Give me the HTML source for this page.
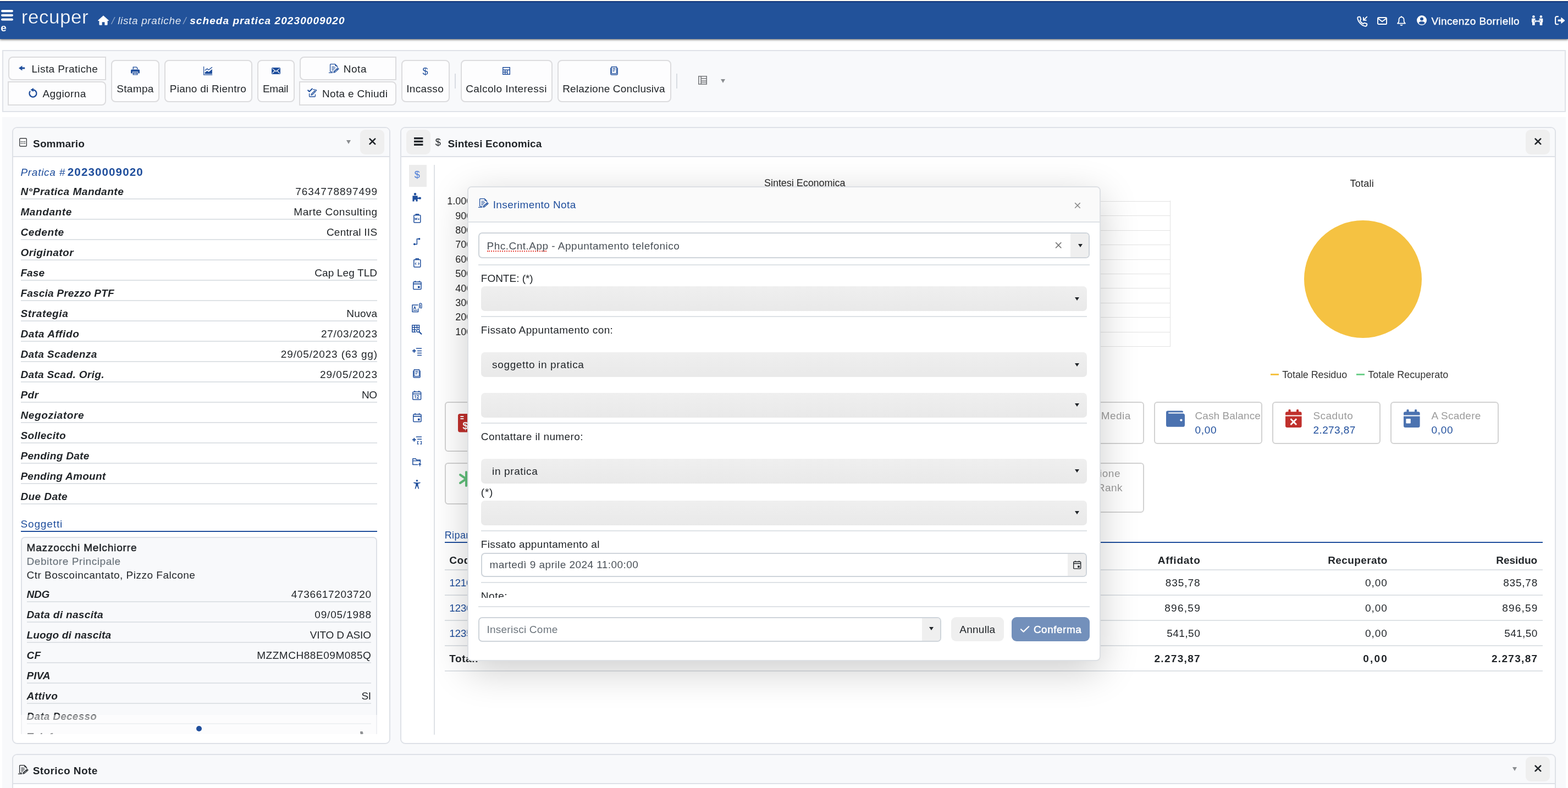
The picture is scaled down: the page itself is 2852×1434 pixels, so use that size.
<!DOCTYPE html>
<html lang="it">
<head>
<meta charset="utf-8">
<title>scheda pratica 20230009020</title>
<style>
*{box-sizing:border-box;margin:0;padding:0}
html,body{width:2852px;height:1434px;overflow:hidden;background:#fff}
body{position:relative;font-family:"Liberation Sans",sans-serif;font-size:19px;color:#212529;line-height:1}
#root{position:absolute;left:0;top:0;width:2852px;height:1434px;overflow:hidden;will-change:transform}
.a{position:absolute}
.x{position:absolute;white-space:nowrap;line-height:1}
svg{display:block;overflow:visible}
#hdr{position:absolute;left:0;top:0;width:2852px;height:71px;background:#22529a;box-shadow:0 1px 4px rgba(0,0,0,.7)}
#hdr .topw{position:absolute;left:0;top:0;width:100%;height:2px;background:#fbfaf2}
#hdr .topd{position:absolute;left:0;top:2px;width:100%;height:2px;background:#0e3278}
#pg{position:absolute;left:4px;top:213px;width:2844px;height:1221px;background:#f8f9fb}
.panel{position:absolute;background:#fff;border:2px solid #dee1e7;border-radius:9px;overflow:hidden}
.ph{position:absolute;left:0;top:0;right:0;height:53px;background:#f8f9fb;border-bottom:2px solid #dee1e7}
.caret{position:absolute;width:0;height:0;border-left:4.5px solid transparent;border-right:4.5px solid transparent;border-top:7px solid #8a8d90}
.cd{position:absolute;width:0;height:0;border-left:4.5px solid transparent;border-right:4.5px solid transparent;border-top:6.5px solid #212529}

.ln{position:absolute;height:2px;background:#dee2e6}
.xbtn{position:absolute;width:44px;height:45px;background:#efefef;border-radius:9px}

.card{position:absolute;background:#fff;border:2px solid #d2d2d2;border-radius:6px}
.gl{position:absolute;height:1px;background:#e2e2e2}
.tl{position:absolute;height:2px;background:#dee2e6}

#modal{position:absolute;left:850px;top:339px;width:1152px;height:864px;background:#fff;border:2px solid #dde0e4;border-radius:8px;box-shadow:0 18px 70px rgba(0,0,0,.2);overflow:hidden}
#modal .mh{position:absolute;left:0;top:0;right:0;height:64px;background:#fafafa;border-bottom:2px solid #dee2e6}
.sel{position:absolute;left:875px;width:1102px;height:44.5px;border-radius:7px;background:linear-gradient(#efefef,#e9e9e9)}
.inp{position:absolute;background:#fff;border:2px solid #ced4da;border-radius:7px;overflow:hidden}
.inp .bt{position:absolute;top:0;bottom:0;right:0;background:#efefef}
.ml{position:absolute;height:2px;background:#dee2e6}
</style>
</head>
<body>
<div id="root">
<div id="pg"></div>
<!-- toolbar -->
<div class="a" style="left:4px;top:91px;width:2844px;height:113px;background:#f8f9fb;border:2px solid #dfe2e8"></div>
<div class="a" style="left:15px;top:103px;width:178px;height:43px;background:#fdfdfe;border:2px solid #dcdcde;border-radius:8px 0 0 8px"></div>
<svg class="a" style="left:33.8px;top:119.4px" width="12" height="10" viewBox="0 0 12 10"><path fill="#1f4e9c" d="M0 5 L6.4 0.4 L6.4 3.5 L11.2 3.5 L11.2 6.5 L6.4 6.5 L6.4 9.6 Z"/></svg>
<div class="x" id="t1" style="left:57.4px;top:115.9px;letter-spacing:0.41px">Lista Pratiche</div>
<div class="a" style="left:14px;top:148px;width:179px;height:44px;background:#fdfdfe;border:2px solid #dcdcde;border-radius:0 8px 8px 0"></div>
<svg class="a" style="left:51.6px;top:160.2px" width="16" height="18" viewBox="0 0 16 18"><path fill="none" stroke="#1f4e9c" stroke-width="2.4" d="M8 3.5 A6.5 6.5 0 1 1 3 5.8"/><path fill="#1f4e9c" d="M8.8 0 L8.8 7 L3.4 3.5 Z"/></svg>
<div class="x" id="t2" style="left:77.5px;top:160.7px;letter-spacing:0.39px">Aggiorna</div>
<div class="a" style="left:202px;top:109px;width:88px;height:77px;background:#fdfdfe;border:2px solid #dcdcde;border-radius:8px"></div>
<svg class="a" style="left:237.7px;top:121px" width="16" height="16" viewBox="0 0 16 16"><g fill="#1f4e9c"><path d="M3.6 0.4 L10.4 0.4 L12.4 2.4 L12.4 5 L3.6 5 Z M5 1.8 L5 5 L11 5 L11 3 L9.8 1.8 Z" fill-rule="evenodd"/><path d="M1.6 5.4 L14.4 5.4 Q16 5.4 16 7 L16 11.6 Q16 12.6 15 12.6 L13.2 12.6 L13.2 9.6 L2.8 9.6 L2.8 12.6 L1 12.6 Q0 12.6 0 11.6 L0 7 Q0 5.4 1.6 5.4 Z"/><path d="M3.6 10.6 L12.4 10.6 L12.4 15.6 L3.6 15.6 Z M5 11.8 L5 12.6 L11 12.6 L11 11.8 Z M5 13.6 L5 14.4 L11 14.4 L11 13.6Z" fill-rule="evenodd"/></g></svg>
<div class="x" id="t3" style="left:212.2px;top:151.9px;letter-spacing:0.34px">Stampa</div>
<div class="a" style="left:299px;top:109px;width:160px;height:77px;background:#fdfdfe;border:2px solid #dcdcde;border-radius:8px"></div>
<svg class="a" style="left:370.2px;top:121px" width="17" height="16" viewBox="0 0 17 16"><g fill="#1f4e9c"><path d="M0 0 L1.2 0 L1.2 14.6 L16.2 14.6 L16.2 15.8 L0 15.8 Z"/><path d="M2.6 13.5 L2.6 10.8 L6.8 7.9 L9.6 9.9 L15.9 5 L15.9 13.5 Z"/></g><path d="M2.6 7.3 L6.8 4.1 L9.6 6.2 L15.9 1.3" fill="none" stroke="#1f4e9c" stroke-width="1.4"/></svg>
<div class="x" id="t4" style="left:308.8px;top:151.9px;letter-spacing:0.26px">Piano di Rientro</div>
<div class="a" style="left:468px;top:109px;width:68px;height:77px;background:#fdfdfe;border:2px solid #dcdcde;border-radius:8px"></div>
<svg class="a" style="left:493.6px;top:123px" width="16" height="12" viewBox="0 0 16 12"><rect x="0" y="0" width="16" height="12" rx="1.6" fill="#1f4e9c"/><path d="M1.2 1.6 L8 7 L14.8 1.6 M1.2 10.6 L5.8 6 M14.8 10.6 L10.2 6" fill="none" stroke="#fff" stroke-width="1.1"/></svg>
<div class="x" id="t5" style="left:477.9px;top:151.9px;letter-spacing:-0.25px">Email</div>
<div class="a" style="left:545px;top:103px;width:176px;height:43px;background:#fdfdfe;border:2px solid #dcdcde;border-radius:8px 0 0 8px"></div>
<svg class="a" style="left:598px;top:115.5px" width="18.6" height="17" viewBox="0 0 18.6 17"><g fill="none" stroke="#1f4e9c" stroke-width="1.3" stroke-linejoin="round" stroke-linecap="round"><path d="M7 14.6 H3.8 Q2.6 14.6 2.6 13.4 V1.8 Q2.6 0.7 3.7 0.7 H11.4 L15.4 4.6 V6.2"/><path d="M5.8 5.3 H10.2 M5.8 7.5 H12 M5.8 9.7 H10.4 M5.8 11.8 H8.4" stroke-width="1.1"/><path d="M0.4 16.3 H6.6" stroke-width="1.2"/></g><path fill="#1f4e9c" d="M11.4 0.7 L15.4 4.6 H12.4 Q11.4 4.6 11.4 3.6 Z M8.2 16.8 L9 13.6 L16.5 6.8 L18.9 9.4 L11.4 16.2 Z"/><path d="M10.8 14.7 L14.9 11" stroke="#fff" stroke-width=".9" stroke-linecap="round"/><path d="M15.5 8 L17.6 10.3" stroke="#fff" stroke-width=".6"/></svg>
<div class="x" id="t6" style="left:624.8px;top:115.9px;letter-spacing:0.52px">Nota</div>
<div class="a" style="left:544px;top:148px;width:177px;height:44px;background:#fdfdfe;border:2px solid #dcdcde;border-radius:0 8px 8px 0"></div>
<svg class="a" style="left:559px;top:160px" width="18" height="17" viewBox="0 0 18 17"><g fill="none" stroke="#1f4e9c" stroke-linejoin="round"><path d="M0.6 3.8 L3.6 6.8 L9.4 1" stroke-width="2"/><path d="M3.6 10 L3.6 15 Q3.6 16 4.6 16 L13.4 16 Q14.4 16 14.4 15 L14.4 11.6 M10.6 3 L13.6 3" stroke-width="1.3"/></g><path fill="#1f4e9c" d="M6.2 13.8 L6.8 10.8 L13.4 4.2 L15.8 6.6 L9.2 13.2 Z M14 3.6 L14.8 2.8 Q15.4 2.4 16 3 L17 4 Q17.4 4.6 17 5.2 L16.2 6 Z"/><path d="M8 12 L13.6 6.4" stroke="#fff" stroke-width=".9"/></svg>
<div class="x" id="t7" style="left:586.0px;top:160.7px;letter-spacing:0.32px">Nota e Chiudi</div>
<div class="a" style="left:730px;top:109px;width:88px;height:77px;background:#fdfdfe;border:2px solid #dcdcde;border-radius:8px"></div>
<div class="x" id="t8" style="left:768.5px;top:120.8px;font-size:18px;color:#1f4e9c;letter-spacing:0px">$</div>
<div class="x" id="t9" style="left:739.2px;top:151.9px;letter-spacing:0.35px">Incasso</div>
<div class="a" style="left:827px;top:134px;width:2px;height:27px;background:#d8dce2"></div>
<div class="a" style="left:838px;top:109px;width:167px;height:77px;background:#fdfdfe;border:2px solid #dcdcde;border-radius:8px"></div>
<svg class="a" style="left:914px;top:122px" width="14" height="14" viewBox="0 0 14 14"><path fill="#1f4e9c" fill-rule="evenodd" d="M0 0 H14 V14 H0 Z M1.4 1.4 V4.6 H12.6 V1.4 Z M1.4 6 V8.6 H4 V6 Z M5.4 6 V8.6 H8 V6 Z M9.4 6 V12.6 H12.6 V6 Z M1.4 10 V12.6 H4 V10 Z M5.4 10 V12.6 H8 V10 Z"/></svg>
<div class="x" id="t10" style="left:847.2px;top:151.9px;letter-spacing:0.42px">Calcolo Interessi</div>
<div class="a" style="left:1014px;top:109px;width:207px;height:77px;background:#fdfdfe;border:2px solid #dcdcde;border-radius:8px"></div>
<svg class="a" style="left:1110px;top:121px" width="14" height="16" viewBox="0 0 14 16"><g fill="none" stroke="#1f4e9c" stroke-width="1.4" stroke-linejoin="round"><path d="M2.2 0.8 H11.6 V12.6 H2.2 Z" /><path d="M0.8 2.6 V13.4 Q0.8 15 2.4 15 H11.6 Q13.2 15 13.2 13.4 V2.6"/><path d="M4.4 3.6 H9.4 M4.4 6 H9.4 M4.4 8.4 H7.6" stroke-width="1.2"/></g></svg>
<div class="x" id="t11" style="left:1023.2px;top:151.9px;letter-spacing:0.19px">Relazione Conclusiva</div>
<div class="a" style="left:1230px;top:134px;width:2px;height:27px;background:#d8dce2"></div>
<svg class="a" style="left:1270px;top:138px" width="16" height="16" viewBox="0 0 16 16"><path fill="#77797c" fill-rule="evenodd" d="M0 0 H16 V16 H0 Z M1.6 1.6 V14.4 H4.4 V1.6 Z M6 1.6 V4.2 H14.4 V1.6 Z M6 5.8 V8.4 H14.4 V5.8 Z M6 10 V14.4 H14.4 V10 Z M6 11.4 H14.4 V12.8 H6 Z"/></svg>
<div class="caret" style="left:1310.5px;top:143.5px"></div>
<!-- sommario -->
<div class="panel" style="left:22px;top:231px;width:688px;height:1123px"><div class="ph"></div></div>
<svg class="a" style="left:35px;top:251px" width="14" height="16" viewBox="0 0 14 16"><rect x="0.7" y="0.7" width="12.6" height="14.6" rx="1.6" fill="#fff" stroke="#3a3d41" stroke-width="1.4"/><path d="M2.6 6.6 H11.4 M2.6 9.6 H11.4" stroke="#212529" stroke-width="1.1" stroke-dasharray="2 1.2" fill="none"/></svg>
<div class="x" id="t12" style="left:60.1px;top:251.9px;font-weight:700;letter-spacing:0.11px">Sommario</div>
<div class="caret" style="left:630.4px;top:255.3px"></div>
<div class="xbtn" style="left:655px;top:236px"></div>
<svg class="a" style="left:671.5px;top:251.5px" width="10.8" height="10.8" viewBox="0 0 10.8 10.8"><path d="M0.6 0.6 L10.2 10.2 M10.2 0.6 L0.6 10.2" stroke="#212529" stroke-width="2.6" stroke-linecap="round" fill="none"/></svg>
<div class="x" id="t13" style="left:37.4px;top:303.9px;font-style:italic;color:#1f4e9c;letter-spacing:0.73px">Pratica #</div>
<div class="x" id="t14" style="left:122.8px;top:302.6px;font-size:20.5px;font-weight:700;color:#1f4e9c;letter-spacing:1.14px">20230009020</div>
<div class="x" id="t15" style="left:37.4px;top:338.9px;font-weight:700;font-style:italic;letter-spacing:0.51px">N°Pratica Mandante</div>
<div class="x" id="t16" style="right:2164.9px;top:338.9px;letter-spacing:0.96px">7634778897499</div>
<div class="ln" style="left:38px;top:361px;width:648px"></div>
<div class="x" id="t17" style="left:37.4px;top:375.9px;font-weight:700;font-style:italic;letter-spacing:0.60px">Mandante</div>
<div class="x" id="t18" style="right:2165.4px;top:375.9px;letter-spacing:0.54px">Marte Consulting</div>
<div class="ln" style="left:38px;top:398px;width:648px"></div>
<div class="x" id="t19" style="left:37.4px;top:412.9px;font-weight:700;font-style:italic;letter-spacing:0.64px">Cedente</div>
<div class="x" id="t20" style="right:2165.7px;top:412.9px;letter-spacing:0.24px">Central IIS</div>
<div class="ln" style="left:38px;top:435px;width:648px"></div>
<div class="x" id="t21" style="left:37.4px;top:449.9px;font-weight:700;font-style:italic;letter-spacing:0.48px">Originator</div>
<div class="ln" style="left:38px;top:472px;width:648px"></div>
<div class="x" id="t22" style="left:37.4px;top:486.9px;font-weight:700;font-style:italic;letter-spacing:0.10px">Fase</div>
<div class="x" id="t23" style="right:2165.8px;top:486.9px;letter-spacing:0.12px">Cap Leg TLD</div>
<div class="ln" style="left:38px;top:509px;width:648px"></div>
<div class="x" id="t24" style="left:37.4px;top:523.9px;font-weight:700;font-style:italic;letter-spacing:0.21px">Fascia Prezzo PTF</div>
<div class="ln" style="left:38px;top:546px;width:648px"></div>
<div class="x" id="t25" style="left:37.4px;top:560.9px;font-weight:700;font-style:italic;letter-spacing:0.64px">Strategia</div>
<div class="x" id="t26" style="right:2165.7px;top:560.9px;letter-spacing:0.24px">Nuova</div>
<div class="ln" style="left:38px;top:583px;width:648px"></div>
<div class="x" id="t27" style="left:37.4px;top:597.9px;font-weight:700;font-style:italic;letter-spacing:0.61px">Data Affido</div>
<div class="x" id="t28" style="right:2165.1px;top:597.9px;letter-spacing:0.79px">27/03/2023</div>
<div class="ln" style="left:38px;top:620px;width:648px"></div>
<div class="x" id="t29" style="left:37.4px;top:634.9px;font-weight:700;font-style:italic;letter-spacing:0.40px">Data Scadenza</div>
<div class="x" id="t30" style="right:2165.0px;top:634.9px;letter-spacing:0.87px">29/05/2023 (63 gg)</div>
<div class="ln" style="left:38px;top:657px;width:648px"></div>
<div class="x" id="t31" style="left:37.4px;top:671.9px;font-weight:700;font-style:italic;letter-spacing:0.35px">Data Scad. Orig.</div>
<div class="x" id="t32" style="right:2164.9px;top:671.9px;letter-spacing:1.01px">29/05/2023</div>
<div class="ln" style="left:38px;top:694px;width:648px"></div>
<div class="x" id="t33" style="left:37.4px;top:708.9px;font-weight:700;font-style:italic;letter-spacing:0.36px">Pdr</div>
<div class="x" id="t34" style="right:2166.2px;top:708.9px;letter-spacing:-0.30px">NO</div>
<div class="ln" style="left:38px;top:731px;width:648px"></div>
<div class="x" id="t35" style="left:37.4px;top:745.9px;font-weight:700;font-style:italic;letter-spacing:0.65px">Negoziatore</div>
<div class="ln" style="left:38px;top:768px;width:648px"></div>
<div class="x" id="t36" style="left:37.4px;top:782.9px;font-weight:700;font-style:italic;letter-spacing:0.38px">Sollecito</div>
<div class="ln" style="left:38px;top:805px;width:648px"></div>
<div class="x" id="t37" style="left:37.4px;top:819.9px;font-weight:700;font-style:italic;letter-spacing:0.32px">Pending Date</div>
<div class="ln" style="left:38px;top:842px;width:648px"></div>
<div class="x" id="t38" style="left:37.4px;top:856.9px;font-weight:700;font-style:italic;letter-spacing:0.27px">Pending Amount</div>
<div class="ln" style="left:38px;top:879px;width:648px"></div>
<div class="x" id="t39" style="left:37.4px;top:893.9px;font-weight:700;font-style:italic;letter-spacing:0.42px">Due Date</div>
<div class="ln" style="left:38px;top:916px;width:648px"></div>
<div class="x" id="t40" style="left:37.4px;top:943.5px;color:#1f4e9c;letter-spacing:0.88px">Soggetti</div>
<div class="a" style="left:38px;top:966px;width:648px;height:2px;background:#1f4e9c"></div>
<div class="a" style="left:38px;top:977px;width:648px;height:359px;overflow:hidden">
<div class="a" style="left:0px;top:0px;width:648px;height:420px;background:#f8f9fb;border:2px solid #dee1e7;border-radius:7px"></div>
</div>
<div class="x" id="t41" style="left:48.5px;top:986.9px;letter-spacing:0.86px;-webkit-text-stroke:.55px #212529">Mazzocchi Melchiorre</div>
<div class="x" id="t42" style="left:48.5px;top:1011.7px;color:#6c757d;letter-spacing:0.56px;-webkit-text-stroke:.2px #6c757d">Debitore Principale</div>
<div class="x" id="t43" style="left:48.5px;top:1036.9px;letter-spacing:0.50px">Ctr Boscoincantato, Pizzo Falcone</div>
<div class="x" id="t44" style="left:48.5px;top:1071.9px;font-weight:700;font-style:italic;letter-spacing:-0.22px">NDG</div>
<div class="x" id="t45" style="right:2176.4px;top:1071.9px;letter-spacing:0.65px">4736617203720</div>
<div class="ln" style="left:49px;top:1094px;width:626px"></div>
<div class="x" id="t46" style="left:48.5px;top:1108.9px;font-weight:700;font-style:italic;letter-spacing:0.35px">Data di nascita</div>
<div class="x" id="t47" style="right:2176.2px;top:1108.9px;letter-spacing:0.85px">09/05/1988</div>
<div class="ln" style="left:49px;top:1131px;width:626px"></div>
<div class="x" id="t48" style="left:48.5px;top:1145.9px;font-weight:700;font-style:italic;letter-spacing:0.17px">Luogo di nascita</div>
<div class="x" id="t49" style="right:2177.2px;top:1145.9px;letter-spacing:-0.15px">VITO D ASIO</div>
<div class="ln" style="left:49px;top:1168px;width:626px"></div>
<div class="x" id="t50" style="left:48.5px;top:1182.9px;font-weight:700;font-style:italic;letter-spacing:0.17px">CF</div>
<div class="x" id="t51" style="right:2176.6px;top:1182.9px;letter-spacing:0.54px">MZZMCH88E09M085Q</div>
<div class="ln" style="left:49px;top:1205px;width:626px"></div>
<div class="x" id="t52" style="left:48.5px;top:1219.9px;font-weight:700;font-style:italic;letter-spacing:0.05px">PIVA</div>
<div class="ln" style="left:49px;top:1242px;width:626px"></div>
<div class="x" id="t53" style="left:48.5px;top:1256.9px;font-weight:700;font-style:italic;letter-spacing:0.49px">Attivo</div>
<div class="x" id="t54" style="right:2177.5px;top:1256.9px;letter-spacing:-0.45px">SI</div>
<div class="ln" style="left:49px;top:1279px;width:626px"></div>
<div class="x" id="t55" style="left:48.5px;top:1293.9px;font-weight:700;font-style:italic;letter-spacing:0.25px">Data Decesso</div>
<div class="ln" style="left:49px;top:1316px;width:626px"></div>
<div class="a" style="left:38px;top:1320px;width:648px;height:16px;overflow:hidden">
<div class="x" style="left:10.5px;top:10.9px;font-weight:700;font-style:italic;letter-spacing:.7px">Telefono</div>
<svg class="a" style="left:617px;top:11px" width="14" height="14" viewBox="0 0 14 14"><path fill="#212529" d="M1 0 L4.4 0 L5.8 4 L3.8 5.4 Q5.4 8.6 8.6 10.2 L10 8.2 L14 9.6 L14 13 Q14 14 13 14 Q1 13 0 1 Q0 0 1 0 Z"/></svg>
</div>
<div class="a" style="left:38px;top:1300.5px;width:648px;height:35.5px;background:rgba(255,255,255,.5)"></div>
<div class="a" style="left:357px;top:1321px;width:10px;height:10px;background:#1f4e9c;border-radius:5px"></div>
<!-- sintesi -->
<div class="panel" style="left:728px;top:231px;width:2102px;height:1123px"><div class="ph"></div></div>
<div class="xbtn" style="left:739px;top:236px"></div>
<svg class="a" style="left:753.3px;top:250px" width="16.4" height="15" viewBox="0 0 16.4 15"><g fill="#212529"><rect x="0" y="0" width="16.4" height="3.4"/><rect x="0" y="5.8" width="16.4" height="3.4"/><rect x="0" y="11.6" width="16.4" height="3.4"/></g></svg>
<div class="x" id="t56" style="left:791.8px;top:250.3px;font-size:18px;color:#212529;letter-spacing:0px">$</div>
<div class="x" id="t57" style="left:814.5px;top:251.9px;font-weight:700;letter-spacing:0.12px">Sintesi Economica</div>
<div class="xbtn" style="left:2775px;top:236px"></div>
<svg class="a" style="left:2791.5px;top:251.5px" width="10.8" height="10.8" viewBox="0 0 10.8 10.8"><path d="M0.6 0.6 L10.2 10.2 M10.2 0.6 L0.6 10.2" stroke="#212529" stroke-width="2.6" stroke-linecap="round" fill="none"/></svg>
<div class="a" style="left:744px;top:300px;width:32px;height:40px;background:#ececec"></div>
<div class="x" id="t58" style="left:753.7px;top:309.3px;font-size:18px;color:#4a7bd6;letter-spacing:0px">$</div>
<div class="a" style="left:789px;top:300px;width:2px;height:1037px;background:#dee2e6"></div>
<svg class="a" style="left:750.4px;top:350.7px" width="16" height="15.4" viewBox="0 0 16 15.4"><g fill="#1f4e9c"><circle cx="5" cy="2.2" r="2.2"/><circle cx="13.8" cy="9.6" r="2.2"/><path d="M0.4 5.2 H9.6 V8.4 H12.6 V11 H9.6 V15.4 H6.4 V12.4 H3.6 V15.4 H0.4 Z"/></g></svg>
<svg class="a" style="left:751.6px;top:389.2px" width="13.6" height="16.8" viewBox="0 0 13.6 16.8"><g fill="none" stroke="#1f4e9c" stroke-width="1.5" stroke-linejoin="round" stroke-linecap="round"><rect x="0.8" y="2.4" width="12" height="13.6" rx="1.2"/><path d="M4.4 2.4 V0.8 H9.2 V2.4" stroke-width="1.8"/></g><path d="M3 11.6 V8 L4.6 10 L6.2 8 V11.6 M8 9.8 H11 M9.5 8.4 V11.2" fill="none" stroke="#1f4e9c" stroke-width="1.1"/></svg>
<svg class="a" style="left:752px;top:432.6px" width="12.4" height="13.2" viewBox="0 0 12.4 13.2"><g fill="#1f4e9c"><circle cx="10.6" cy="1.8" r="1.8"/><circle cx="1.8" cy="11.4" r="1.8"/></g><path d="M10.6 1.8 H6.4 V11.4 H1.8" fill="none" stroke="#1f4e9c" stroke-width="1.5" stroke-linejoin="round" stroke-linecap="round"/></svg>
<svg class="a" style="left:751.6px;top:470.3px" width="13.6" height="16.8" viewBox="0 0 13.6 16.8"><g fill="none" stroke="#1f4e9c" stroke-width="1.5" stroke-linejoin="round" stroke-linecap="round"><rect x="0.8" y="2.4" width="12" height="13.6" rx="1.2"/><path d="M4.4 2.4 V0.8 H9.2 V2.4" stroke-width="1.8"/></g><path d="M5 7.8 L3.2 9.8 L5 11.8 M8.6 7.8 L10.4 9.8 L8.6 11.8" fill="none" stroke="#1f4e9c" stroke-width="1.1"/></svg>
<svg class="a" style="left:750.9px;top:510.7px" width="15.8" height="16.2" viewBox="0 0 15.8 16.2"><g fill="none" stroke="#1f4e9c" stroke-width="1.5" stroke-linejoin="round" stroke-linecap="round"><rect x="0.8" y="2" width="14.2" height="13.4" rx="1.2"/><path d="M0.8 5.6 H15 M4.2 0.6 V2 M11.6 0.6 V2" stroke-width="1.6"/></g><rect x="9" y="9.6" width="3.6" height="3.6" fill="#1f4e9c"/></svg>
<svg class="a" style="left:749px;top:550.8px" width="19" height="17.4" viewBox="0 0 19 17.4"><g fill="none" stroke="#1f4e9c" stroke-width="1.5" stroke-linejoin="round" stroke-linecap="round"><path d="M11 4 H1 V16.4 H11.6 V11"/><path d="M3.4 11.6 L5.4 6.6 L7.4 11.6 M4.2 10 H6.6 M3 13.6 H9.6" stroke-width="1.1"/><path d="M13.6 9.6 V3.2 Q13.6 0.8 15.8 0.8 Q18 0.8 18 3.2 V8.6 Q18 10 16.8 10 Q15.6 10 15.6 8.6 V3.6" stroke-width="1.2"/></g></svg>
<svg class="a" style="left:749.3px;top:591.3px" width="18.2" height="17.7" viewBox="0 0 18.2 17.7"><g fill="none" stroke="#1f4e9c" stroke-width="1.5" stroke-linejoin="round" stroke-linecap="round" stroke-width="1.4"><path d="M0.8 0.8 H13.6 V7 M0.8 0.8 V13.2 H7 M0.8 4.8 H13.6 M0.8 9 H7.4 M5 0.8 V13.2 M9.4 0.8 V6.6"/><circle cx="11.4" cy="10.8" r="2.6"/><path d="M13.4 12.8 L17.4 16.8" stroke-width="2.2"/></g></svg>
<svg class="a" style="left:750px;top:633px" width="17" height="14.4" viewBox="0 0 17 14.4"><path d="M6.8 1 H17 M9 5.4 H17 M9 9.6 H17 M9 13.6 H17" fill="none" stroke="#1f4e9c" stroke-width="1.5"/><path d="M0 5.6 H6.6 M3.3 2.4 V8.8" fill="none" stroke="#1f4e9c" stroke-width="2"/></svg>
<svg class="a" style="left:751.3px;top:672.2px" width="14" height="16" viewBox="0 0 14 16"><g fill="none" stroke="#1f4e9c" stroke-width="1.4" stroke-linejoin="round"><path d="M2.2 0.8 H11.6 V12.6 H2.2 Z" /><path d="M0.8 2.6 V13.4 Q0.8 15 2.4 15 H11.6 Q13.2 15 13.2 13.4 V2.6"/><path d="M4.4 3.6 H9.4 M4.4 6 H9.4 M4.4 8.4 H7.6" stroke-width="1.2"/></g></svg>
<svg class="a" style="left:750.4px;top:711px" width="16.4" height="17" viewBox="0 0 16.4 17"><g fill="none" stroke="#1f4e9c" stroke-width="1.5" stroke-linejoin="round" stroke-linecap="round"><rect x="0.8" y="2.2" width="14.8" height="14" rx="1.2"/><path d="M0.8 5.8 H15.6 M4.4 0.6 V2.2 M12 0.6 V2.2" stroke-width="1.6"/><path d="M4.4 9.4 L5.8 8.4 V13.6 M8.4 9.6 Q8.6 8.4 10 8.4 Q11.6 8.6 11.4 10 Q11.2 11 8.4 13.6 H11.8" stroke-width="1.1"/></g></svg>
<svg class="a" style="left:750.9px;top:752px" width="15.8" height="16.2" viewBox="0 0 15.8 16.2"><g fill="none" stroke="#1f4e9c" stroke-width="1.5" stroke-linejoin="round" stroke-linecap="round"><rect x="0.8" y="2" width="14.2" height="13.4" rx="1.2"/><path d="M0.8 5.6 H15 M4.2 0.6 V2 M11.6 0.6 V2" stroke-width="1.6"/></g><rect x="9" y="9.6" width="3.6" height="3.6" fill="#1f4e9c"/></svg>
<svg class="a" style="left:750px;top:794px" width="17" height="14.8" viewBox="0 0 17 14.8"><path d="M6.8 1 H17 M9 5.2 H17" fill="none" stroke="#1f4e9c" stroke-width="1.5"/><path d="M0 6.2 H6.6 M3.3 3 V9.4" fill="none" stroke="#1f4e9c" stroke-width="2"/><path d="M11.4 9.4 H9.6 V14 H11.4 M14.6 9.4 H16.4 V14 H14.6" fill="none" stroke="#1f4e9c" stroke-width="1.3"/></svg>
<svg class="a" style="left:750px;top:834px" width="17" height="14.6" viewBox="0 0 17 14.6"><g fill="none" stroke="#1f4e9c" stroke-width="1.5" stroke-linejoin="round" stroke-linecap="round" stroke-width="1.4"><path d="M9.6 11.4 H0.8 V0.8 H6 L7.6 3 H14.4 V7.6"/><path d="M0.8 4.6 H14.4" stroke-width="1.1"/></g><path d="M13.6 14.6 V10 M11.4 11.6 L13.6 9.2 L15.8 11.6" fill="none" stroke="#1f4e9c" stroke-width="1.5"/></svg>
<svg class="a" style="left:752px;top:872.5px" width="12.8" height="16.8" viewBox="0 0 12.8 16.8"><g fill="#1f4e9c"><circle cx="6.4" cy="1.7" r="1.7"/><path d="M0.4 4.6 Q6.4 5.8 12.4 4.6 L12.6 6 Q10 6.8 8.6 7 V10.6 L10.2 16.4 L8.8 16.8 L6.8 11.4 H6 L4 16.8 L2.6 16.4 L4.2 10.6 V7 Q2.8 6.8 0.2 6 Z"/></g></svg>
<div class="x" id="t59" style="left:1390.0px;top:324.3px;font-size:18px;color:#262626;letter-spacing:-0.04px">Sintesi Economica</div>
<div class="gl" style="left:860px;top:366px;width:1268px"></div>
<div class="x" id="t60" style="right:1993.7px;top:357.2px;font-size:18px;color:#262626;letter-spacing:0px">1.000</div>
<div class="gl" style="left:860px;top:392px;width:1268px"></div>
<div class="x" id="t61" style="right:1993.7px;top:383.6px;font-size:18px;color:#262626;letter-spacing:0px">900</div>
<div class="gl" style="left:860px;top:419px;width:1268px"></div>
<div class="x" id="t62" style="right:1993.7px;top:410.0px;font-size:18px;color:#262626;letter-spacing:0px">800</div>
<div class="gl" style="left:860px;top:445px;width:1268px"></div>
<div class="x" id="t63" style="right:1993.7px;top:436.4px;font-size:18px;color:#262626;letter-spacing:0px">700</div>
<div class="gl" style="left:860px;top:472px;width:1268px"></div>
<div class="x" id="t64" style="right:1993.7px;top:462.8px;font-size:18px;color:#262626;letter-spacing:0px">600</div>
<div class="gl" style="left:860px;top:498px;width:1268px"></div>
<div class="x" id="t65" style="right:1993.7px;top:489.2px;font-size:18px;color:#262626;letter-spacing:0px">500</div>
<div class="gl" style="left:860px;top:524px;width:1268px"></div>
<div class="x" id="t66" style="right:1993.7px;top:515.6px;font-size:18px;color:#262626;letter-spacing:0px">400</div>
<div class="gl" style="left:860px;top:551px;width:1268px"></div>
<div class="x" id="t67" style="right:1993.7px;top:542.0px;font-size:18px;color:#262626;letter-spacing:0px">300</div>
<div class="gl" style="left:860px;top:577px;width:1268px"></div>
<div class="x" id="t68" style="right:1993.7px;top:568.4px;font-size:18px;color:#262626;letter-spacing:0px">200</div>
<div class="gl" style="left:860px;top:604px;width:1268px"></div>
<div class="x" id="t69" style="right:1993.7px;top:594.8px;font-size:18px;color:#262626;letter-spacing:0px">100</div>
<div class="gl" style="left:860px;top:630px;width:1268px"></div>
<div class="a" style="left:2128px;top:365px;width:1px;height:266px;background:#e2e2e2"></div>
<div class="a" style="left:864px;top:365px;width:1px;height:266px;background:#e2e2e2"></div>
<div class="x" id="t70" style="left:2455.6px;top:325.0px;font-size:18px;color:#262626;letter-spacing:0.23px">Totali</div>
<div class="a" style="left:2372px;top:401px;width:214px;height:214px;background:#f5c242;border-radius:107px"></div>
<div class="a" style="left:2311px;top:680px;width:15px;height:3px;background:#f5c242"></div>
<div class="x" id="t71" style="left:2332.2px;top:673.1px;font-size:18px;color:#333;letter-spacing:-0.08px">Totale Residuo</div>
<div class="a" style="left:2467px;top:680px;width:15px;height:3px;background:#6fd08c"></div>
<div class="x" id="t72" style="left:2488.2px;top:673.1px;font-size:18px;color:#333;letter-spacing:0.00px">Totale Recuperato</div>
<div class="card" style="left:809px;top:731px;width:197px;height:91px"></div>
<svg class="a" style="left:833.3px;top:752.8px" width="25" height="33.4" viewBox="0 0 25 33.4"><path fill="#c0302c" d="M3.6 0 H17 L25 8 V29.8 Q25 33.4 21.4 33.4 H3.6 Q0 33.4 0 29.8 V3.6 Q0 0 3.6 0 Z"/><path d="M4.4 5 H10.4 M4.4 9 H10.4" stroke="#fff" stroke-width="2.2" fill="none"/></svg><div class="x" id="t73" style="left:841.2px;top:765.4px;font-weight:700;color:#fff;letter-spacing:0px">$</div>
<div class="card" style="left:1024px;top:731px;width:197px;height:77px"></div>
<div class="card" style="left:1239px;top:731px;width:197px;height:77px"></div>
<div class="card" style="left:1454px;top:731px;width:197px;height:77px"></div>
<div class="card" style="left:1669px;top:731px;width:197px;height:77px"></div>
<div class="card" style="left:1884px;top:731px;width:197px;height:77px"></div>
<div class="card" style="left:2099px;top:731px;width:197px;height:77px"></div>
<div class="card" style="left:2314px;top:731px;width:197px;height:77px"></div>
<div class="card" style="left:2529px;top:731px;width:197px;height:77px"></div>
<div class="x" id="t74" style="right:795.1px;top:747.1px;color:#9b9b9b;letter-spacing:0.5px">Rata Media</div>
<svg class="a" style="left:2121px;top:746.5px" width="34" height="29.8" viewBox="0 0 34 29.8"><path fill="#4b72b0" d="M3.4 0.4 H29 Q31 0.4 31 2.4 V3.4 H5 Q4 3.4 4 4.4 Q4 5.4 5 5.4 H30.4 Q34 5.4 34 9 V26.2 Q34 29.8 30.4 29.8 H3.6 Q0 29.8 0 26.2 V3.8 Q0 0.4 3.4 0.4 Z"/><circle cx="27.4" cy="17.6" r="2.1" fill="#fff"/></svg>
<div class="x" id="t75" style="left:2173.5px;top:747.1px;color:#9b9b9b;letter-spacing:0.09px">Cash Balance</div>
<div class="x" id="t76" style="left:2173.5px;top:772.7px;color:#1f4e9c;letter-spacing:0.67px">0,00</div>
<svg class="a" style="left:2337.8px;top:745.2px" width="29.6" height="33" viewBox="0 0 29.6 33"><path fill="#c0302c" d="M5.4 1.6 Q5.4 0 7 0 H8 Q9.6 0 9.6 1.6 V4.2 H20 V1.6 Q20 0 21.6 0 H22.6 Q24.2 0 24.2 1.6 V4.2 H26.4 Q29.6 4.2 29.6 7.4 V10.4 H0 V7.4 Q0 4.2 3.2 4.2 H5.4 Z M0 12.6 H29.6 V29.8 Q29.6 33 26.4 33 H3.2 Q0 33 0 29.8 Z"/><path d="M10.4 18.2 L19.2 27 M19.2 18.2 L10.4 27" stroke="#fff" stroke-width="3" stroke-linecap="round"/></svg>
<div class="x" id="t77" style="left:2388.5px;top:747.1px;color:#9b9b9b;letter-spacing:0.43px">Scaduto</div>
<div class="x" id="t78" style="left:2388.5px;top:772.7px;color:#1f4e9c;letter-spacing:0.40px">2.273,87</div>
<svg class="a" style="left:2552.8px;top:745.2px" width="29.6" height="33" viewBox="0 0 29.6 33"><path fill="#4b72b0" d="M5.4 1.6 Q5.4 0 7 0 H8 Q9.6 0 9.6 1.6 V4.2 H20 V1.6 Q20 0 21.6 0 H22.6 Q24.2 0 24.2 1.6 V4.2 H26.4 Q29.6 4.2 29.6 7.4 V10.4 H0 V7.4 Q0 4.2 3.2 4.2 H5.4 Z M0 12.6 H29.6 V29.8 Q29.6 33 26.4 33 H3.2 Q0 33 0 29.8 Z"/><rect x="4.4" y="17" width="8.4" height="8.4" rx="1.2" fill="#fff"/></svg>
<div class="x" id="t79" style="left:2603.5px;top:747.1px;color:#9b9b9b;letter-spacing:0.27px">A Scadere</div>
<div class="x" id="t80" style="left:2603.5px;top:772.7px;color:#1f4e9c;letter-spacing:0.67px">0,00</div>
<div class="card" style="left:809px;top:841.5px;width:197px;height:76px"></div>
<svg class="a" style="left:835px;top:857px" width="26" height="29" viewBox="0 0 26 29"><path d="M13 2 V27 M2 7 L13 14.5 L2 22 M24 7 L13 14.5 L24 22" fill="none" stroke="#62c17c" stroke-width="4" stroke-linecap="round"/></svg>
<div class="card" style="left:1024px;top:841.5px;width:197px;height:76px"></div>
<div class="card" style="left:1239px;top:841.5px;width:197px;height:76px"></div>
<div class="card" style="left:1454px;top:841.5px;width:197px;height:76px"></div>
<div class="card" style="left:1669px;top:841.5px;width:197px;height:76px"></div>
<div class="card" style="left:1884px;top:841.5px;width:197px;height:91px"></div>
<div class="x" id="t81" style="right:814.0px;top:851.9px;color:#9b9b9b;letter-spacing:0.5px">Posizione</div>
<div class="x" id="t82" style="right:809.9px;top:877.9px;color:#9b9b9b;letter-spacing:0.5px">Credit Rank</div>
<div class="x" id="t83" style="left:808.7px;top:964.7px;font-size:18px;color:#1f4e9c;letter-spacing:0.4px">Ripartizione</div>
<div class="a" style="left:809px;top:986px;width:1997px;height:2px;background:#1f4e9c"></div>
<div class="x" id="t84" style="left:817.2px;top:1010.2px;font-weight:700;letter-spacing:0.6px">Codice</div>
<div class="x" id="t85" style="right:668.5px;top:1009.9px;font-weight:700;letter-spacing:0.75px">Affidato</div>
<div class="x" id="t86" style="right:328.2px;top:1009.9px;font-weight:700;letter-spacing:0.41px">Recuperato</div>
<div class="x" id="t87" style="right:55.8px;top:1009.9px;font-weight:700;letter-spacing:0.01px">Residuo</div>
<div class="tl" style="left:809px;top:1036px;width:1997px"></div>
<div class="x" id="t88" style="left:817.2px;top:1050.5px;color:#1f4e9c;letter-spacing:-0.3px">1210</div>
<div class="x" id="t89" style="right:668.4px;top:1050.5px;letter-spacing:0.94px">835,78</div>
<div class="x" id="t90" style="right:328.3px;top:1050.5px;letter-spacing:0.91px">0,00</div>
<div class="x" id="t91" style="right:55.0px;top:1050.5px;letter-spacing:0.78px">835,78</div>
<div class="tl" style="left:809px;top:1082px;width:1997px"></div>
<div class="x" id="t92" style="left:817.2px;top:1096.7px;color:#1f4e9c;letter-spacing:-0.3px">1230</div>
<div class="x" id="t93" style="right:668.0px;top:1096.7px;letter-spacing:1.28px">896,59</div>
<div class="x" id="t94" style="right:328.3px;top:1096.7px;letter-spacing:0.91px">0,00</div>
<div class="x" id="t95" style="right:54.6px;top:1096.7px;letter-spacing:1.18px">896,59</div>
<div class="tl" style="left:809px;top:1128px;width:1997px"></div>
<div class="x" id="t96" style="left:817.2px;top:1142.8px;color:#1f4e9c;letter-spacing:-0.3px">1235</div>
<div class="x" id="t97" style="right:668.8px;top:1142.8px;letter-spacing:0.48px">541,50</div>
<div class="x" id="t98" style="right:328.3px;top:1142.8px;letter-spacing:0.91px">0,00</div>
<div class="x" id="t99" style="right:55.4px;top:1142.8px;letter-spacing:0.38px">541,50</div>
<div class="tl" style="left:809px;top:1174px;width:1997px"></div>
<div class="x" id="t100" style="left:817.2px;top:1188.6px;font-weight:700;letter-spacing:0.6px">Totali</div>
<div class="x" id="t101" style="right:668.0px;top:1188.6px;font-weight:700;letter-spacing:1.33px">2.273,87</div>
<div class="x" id="t102" style="right:327.1px;top:1188.6px;font-weight:700;letter-spacing:2.14px">0,00</div>
<div class="x" id="t103" style="right:54.5px;top:1188.6px;font-weight:700;letter-spacing:1.33px">2.273,87</div>
<div class="tl" style="left:809px;top:1220px;width:1997px"></div>
<!-- storico -->
<div class="panel" style="left:22px;top:1372px;width:2808px;height:120px"><div class="ph"></div></div>
<svg class="a" style="left:33px;top:1392px" width="18.6" height="17" viewBox="0 0 18.6 17"><g fill="none" stroke="#212529" stroke-width="1.3" stroke-linejoin="round" stroke-linecap="round"><path d="M7 14.6 H3.8 Q2.6 14.6 2.6 13.4 V1.8 Q2.6 0.7 3.7 0.7 H11.4 L15.4 4.6 V6.2"/><path d="M5.8 5.3 H10.2 M5.8 7.5 H12 M5.8 9.7 H10.4 M5.8 11.8 H8.4" stroke-width="1.1"/><path d="M0.4 16.3 H6.6" stroke-width="1.2"/></g><path fill="#212529" d="M11.4 0.7 L15.4 4.6 H12.4 Q11.4 4.6 11.4 3.6 Z M8.2 16.8 L9 13.6 L16.5 6.8 L18.9 9.4 L11.4 16.2 Z"/><path d="M10.8 14.7 L14.9 11" stroke="#fff" stroke-width=".9" stroke-linecap="round"/><path d="M15.5 8 L17.6 10.3" stroke="#fff" stroke-width=".6"/></svg>
<div class="x" id="t104" style="left:59.7px;top:1392.9px;font-weight:700;letter-spacing:0.42px">Storico Note</div>
<div class="caret" style="left:2750.5px;top:1396.3px"></div>
<div class="xbtn" style="left:2775px;top:1377px"></div>
<svg class="a" style="left:2791.5px;top:1392.5px" width="10.8" height="10.8" viewBox="0 0 10.8 10.8"><path d="M0.6 0.6 L10.2 10.2 M10.2 0.6 L0.6 10.2" stroke="#212529" stroke-width="2.6" stroke-linecap="round" fill="none"/></svg>
<!-- header -->
<div id="hdr"><div class="topw"></div><div class="topd"></div></div>
<div id="hc">
<svg class="a" style="left:2px;top:18px" width="22" height="20" viewBox="0 0 22 20"><g fill="#fff"><rect x="0" y="0" width="22" height="4.2" rx="2.1"/><rect x="0" y="7.7" width="22" height="4.2" rx="2.1"/><rect x="0" y="15.4" width="22" height="4.2" rx="2.1"/></g></svg>
<div class="x" id="t105" style="left:1.2px;top:40.9px;font-weight:700;color:#fff;letter-spacing:0px">e</div>
<div class="x" id="t106" style="left:38.7px;top:13.0px;font-size:35px;color:#fff;letter-spacing:0.57px;-webkit-text-stroke:.4px #22529a">recuper</div>
<svg class="a" style="left:178px;top:28px" width="20" height="18" viewBox="0 0 20 18"><path fill="#fff" d="M10 0.3 L0.2 8.9 Q-0.2 9.6 0.6 9.9 L2.4 9.9 L2.4 16.6 Q2.4 17.8 3.6 17.8 L7.6 17.8 L7.6 12.2 L12.4 12.2 L12.4 17.8 L16.4 17.8 Q17.6 17.8 17.6 16.6 L17.6 9.9 L19.4 9.9 Q20.2 9.6 19.8 8.9 Z"/></svg>
<div class="x" id="t107" style="left:202.7px;top:27.9px;font-style:italic;color:rgba(255,255,255,.45);letter-spacing:0px">/</div>
<div class="x" id="t108" style="left:214.2px;top:27.9px;font-style:italic;color:rgba(255,255,255,.85);letter-spacing:0.65px">lista pratiche</div>
<div class="x" id="t109" style="left:333.2px;top:27.9px;font-style:italic;color:rgba(255,255,255,.45);letter-spacing:0px">/</div>
<div class="x" id="t110" style="left:345.2px;top:27.9px;font-weight:700;font-style:italic;color:#fff;letter-spacing:1.07px">scheda pratica 20230009020</div>
<svg class="a" style="left:2468px;top:29px" width="20" height="20" viewBox="0 0 20 20"><g fill="none" stroke="#fff" stroke-width="1.9" stroke-linecap="round" stroke-linejoin="round"><path d="M3.2 1.6 C1.6 2 1 3.2 1.4 5.2 C2.6 11 8.4 17.2 14.6 18.6 C16.4 19 17.8 18.2 18.2 16.6 L18.4 15.2 C18.5 14.6 18.2 14.2 17.6 14 L14.2 12.8 C13.6 12.6 13.2 12.8 12.8 13.2 L11.6 14.4 C9 13.2 6.8 11 5.6 8.4 L6.8 7.2 C7.2 6.8 7.4 6.4 7.2 5.8 L6 2.4 C5.8 1.8 5.4 1.5 4.8 1.6 Z"/><path d="M18.2 1.6 L12 7.8 M12 3 L12 7.8 L16.8 7.8"/></g></svg>
<svg class="a" style="left:2505px;top:31px" width="18" height="14" viewBox="0 0 18 14"><g fill="none" stroke="#fff" stroke-width="1.9" stroke-linejoin="round" stroke-linecap="round"><rect x="1" y="1" width="16" height="12" rx="1.6"/><path d="M1.4 2.4 L9 8.2 L16.6 2.4"/></g></svg>
<svg class="a" style="left:2541px;top:29px" width="16" height="18" viewBox="0 0 16 18"><g fill="none" stroke="#fff" stroke-width="1.8" stroke-linejoin="round" stroke-linecap="round"><path d="M8 1 L8 2 M8 2 C5 2 3.4 4.4 3.4 7 L3.4 9.6 C3.4 11.4 2.2 12.6 1 13.6 L15 13.6 C13.8 12.6 12.6 11.4 12.6 9.6 L12.6 7 C12.6 4.4 11 2 8 2 Z M6.6 16.6 Q8 17.6 9.4 16.6"/></g></svg>
<svg class="a" style="left:2577px;top:28px" width="18" height="18" viewBox="0 0 18 18"><circle cx="9" cy="9" r="9" fill="#fff"/><circle cx="9" cy="6.6" r="3" fill="#22529a"/><path d="M3.4 14.2 Q4.4 11 9 11 Q13.6 11 14.6 14.2 Q12.4 16.6 9 16.6 Q5.6 16.6 3.4 14.2 Z" fill="#22529a"/></svg>
<div class="x" id="t111" style="left:2603.5px;top:28.5px;color:#fff;letter-spacing:0.43px;-webkit-text-stroke:.35px #fff">Vincenzo Borriello</div>
<svg class="a" style="left:2785.9px;top:28.3px" width="20.4" height="18" viewBox="0 0 20.4 18"><g fill="#fff"><circle cx="3.4" cy="2.2" r="2.25"/><circle cx="16.9" cy="2.2" r="2.25"/><path d="M0.9 5.5 H5.8 Q6.7 5.5 6.7 6.5 V12.4 L5.6 12.9 V17.2 Q5.6 17.9 4.9 17.9 H1.7 Q1 17.9 1 17.2 V12.9 L0 12 V6.5 Q0 5.5 0.9 5.5 Z"/><path transform="translate(20.3,0) scale(-1,1)" d="M0.9 5.5 H5.8 Q6.7 5.5 6.7 6.5 V12.4 L5.6 12.9 V17.2 Q5.6 17.9 4.9 17.9 H1.7 Q1 17.9 1 17.2 V12.9 L0 12 V6.5 Q0 5.5 0.9 5.5 Z"/><path d="M4.6 10.5 L7.3 7.7 L7.3 9.6 L13 9.6 L13 7.7 L15.7 10.5 L13 13.3 L13 11.4 L7.3 11.4 L7.3 13.3 Z" stroke="#22529a" stroke-width="1.3" paint-order="stroke" stroke-linejoin="round"/></g></svg>
<svg class="a" style="left:2828px;top:29px" width="18.4" height="16.4" viewBox="0 0 18.4 16.4"><path d="M6 1.1 H4 Q1.1 1.1 1.1 4 V12.4 Q1.1 15.3 4 15.3 H6" fill="none" stroke="#fff" stroke-width="2.1" stroke-linecap="round"/><path fill="#fff" d="M6.4 6.5 L11.3 6.5 L11.3 3.4 Q11.4 2.4 12.3 3 L18 7.7 Q18.6 8.3 18 8.9 L12.3 13.6 Q11.4 14.2 11.3 13.2 L11.3 10.1 L6.4 10.1 Q5.6 10.1 5.6 9.3 L5.6 7.3 Q5.6 6.5 6.4 6.5 Z"/></svg>
</div>
<!-- modal -->
<div id="modal"><div class="mh"></div></div>
<svg class="a" style="left:869.9px;top:361px" width="18.6" height="17" viewBox="0 0 18.6 17"><g fill="none" stroke="#1f4e9c" stroke-width="1.3" stroke-linejoin="round" stroke-linecap="round"><path d="M7 14.6 H3.8 Q2.6 14.6 2.6 13.4 V1.8 Q2.6 0.7 3.7 0.7 H11.4 L15.4 4.6 V6.2"/><path d="M5.8 5.3 H10.2 M5.8 7.5 H12 M5.8 9.7 H10.4 M5.8 11.8 H8.4" stroke-width="1.1"/><path d="M0.4 16.3 H6.6" stroke-width="1.2"/></g><path fill="#1f4e9c" d="M11.4 0.7 L15.4 4.6 H12.4 Q11.4 4.6 11.4 3.6 Z M8.2 16.8 L9 13.6 L16.5 6.8 L18.9 9.4 L11.4 16.2 Z"/><path d="M10.8 14.7 L14.9 11" stroke="#fff" stroke-width=".9" stroke-linecap="round"/><path d="M15.5 8 L17.6 10.3" stroke="#fff" stroke-width=".6"/></svg>
<div class="x" id="t112" style="left:896.7px;top:363.0px;color:#1f4e9c;letter-spacing:0.39px">Inserimento Nota</div>
<svg class="a" style="left:1954.8px;top:368.5px" width="9.8" height="9.8" viewBox="0 0 9.8 9.8"><path d="M0.6 0.6 L9.2 9.2 M9.2 0.6 L0.6 9.2" stroke="#8a8a8a" stroke-width="1.6" stroke-linecap="round" fill="none"/></svg>
<div class="inp" style="left:870px;top:423px;width:1112px;height:47px"><div class="bt" style="width:33px"></div></div>
<div class="x" id="t113" style="left:885.5px;top:437.5px;color:#495057;letter-spacing:0.49px">Phc.Cnt.App - Appuntamento telefonico</div>
<div class="a" style="left:886px;top:456px;width:108px;height:0;border-top:2px dotted #e8443a"></div>
<svg class="a" style="left:1919.8px;top:440.8px" width="10.4" height="10.4" viewBox="0 0 10.4 10.4"><path d="M0.6 0.6 L9.8 9.8 M9.8 0.6 L0.6 9.8" stroke="#7a7a7a" stroke-width="1.7" stroke-linecap="round" fill="none"/></svg>
<div class="cd" style="left:1960.5px;top:444px"></div>
<div class="ml" style="left:870px;top:481px;width:1112px"></div>
<div class="x" id="t114" style="left:874.8px;top:497.1px;letter-spacing:-0.01px">FONTE: (*)</div>
<div class="sel" style="top:521.1px"></div><div class="cd" style="left:1954.5px;top:540.5px"></div>
<div class="ml" style="left:875px;top:575px;width:1102px"></div>
<div class="x" id="t115" style="left:874.8px;top:591.2px;letter-spacing:0.41px">Fissato Appuntamento con:</div>
<div class="sel" style="top:641.3px"></div><div class="cd" style="left:1954.5px;top:660.7px"></div><div class="x" id="t116" style="left:895.1px;top:653.8px;letter-spacing:0.64px">soggetto in pratica</div>
<div class="sel" style="top:715px"></div><div class="cd" style="left:1954.5px;top:734.4px"></div>
<div class="ml" style="left:875px;top:769px;width:1102px"></div>
<div class="x" id="t117" style="left:874.8px;top:784.9px;letter-spacing:0.42px">Contattare il numero:</div>
<div class="sel" style="top:835px"></div><div class="cd" style="left:1954.5px;top:854.4px"></div><div class="x" id="t118" style="left:895.1px;top:847.5px;letter-spacing:0.62px">in pratica</div>
<div class="x" id="t119" style="left:874.8px;top:886.3px;letter-spacing:0.8px">(*)</div>
<div class="sel" style="top:911px"></div><div class="cd" style="left:1954.5px;top:930.4px"></div>
<div class="ml" style="left:875px;top:965px;width:1102px"></div>
<div class="x" id="t120" style="left:874.8px;top:981.0px;letter-spacing:0.34px">Fissato appuntamento al</div>
<div class="inp" style="left:875px;top:1005.5px;width:1102px;height:44.5px"><div class="bt" style="width:33px"></div></div>
<div class="x" id="t121" style="left:890.5px;top:1018.1px;color:#495057;letter-spacing:0.45px">martedì 9 aprile 2024 11:00:00</div>
<svg class="a" style="left:1952px;top:1019.6px" width="14.4" height="15.6" viewBox="0 0 14.4 15.6"><g fill="none" stroke="#212529" stroke-width="1.4"><rect x="0.7" y="2.2" width="13" height="12.7" rx="1"/><path d="M0.7 5.6 H13.7 M3.8 0.4 V2.6 M10.6 0.4 V2.6" stroke-width="1.5"/></g><rect x="8.2" y="9.4" width="3.6" height="3.6" fill="#212529"/></svg>
<div class="ml" style="left:875px;top:1059px;width:1102px"></div>
<div class="a" style="left:870px;top:1070px;width:400px;height:18.2px;overflow:hidden"><div class="x" style="left:4.8px;top:4.5px;letter-spacing:.6px">Note:</div></div>
<div class="ml" style="left:870px;top:1103px;width:1112px"></div>
<div class="inp" style="left:870px;top:1123px;width:842px;height:45px"><div class="bt" style="width:33px"></div></div>
<div class="x" id="t122" style="left:885.5px;top:1135.8px;color:#6c757d;letter-spacing:0.24px">Inserisci Come</div>
<div class="cd" style="left:1690.4px;top:1141px"></div>
<div class="a" style="left:1730px;top:1123.4px;width:96px;height:43.6px;background:#efefef;border-radius:9px"></div>
<div class="x" id="t123" style="left:1745.2px;top:1135.8px;letter-spacing:0.27px">Annulla</div>
<div class="a" style="left:1840px;top:1123.4px;width:142px;height:43.6px;background:#7390bb;border-radius:9px"></div>
<svg class="a" style="left:1855.6px;top:1139.3px" width="16.2" height="11.8" viewBox="0 0 16.2 11.8"><path d="M1 6.2 L5.6 10.6 L15.2 1.2" fill="none" stroke="#fff" stroke-width="2.2" stroke-linecap="round" stroke-linejoin="round"/></svg>
<div class="x" id="t124" style="left:1879.9px;top:1135.8px;color:#fff;letter-spacing:0.50px;-webkit-text-stroke:.5px #fff">Conferma</div>
</div>
</body>
</html>
